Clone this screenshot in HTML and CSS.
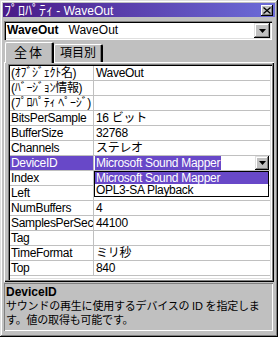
FILE: index.html
```html
<!DOCTYPE html>
<html lang="ja">
<head>
<meta charset="utf-8">
<title>ﾌﾟﾛﾊﾟﾃｨ - WaveOut</title>
<link rel="stylesheet" href="styles.css">
</head>
<body>
<div class="window">
  <div class="titlebar">
    <span class="title"><span class="kana">ﾌﾟﾛﾊﾟﾃｨ</span> - WaveOut</span>
    <span class="close"><svg width="8" height="7" viewBox="0 0 8 7"><path d="M0.5 0.5 L7.5 6.5 M7.5 0.5 L0.5 6.5" stroke="#000" stroke-width="1.3" fill="none"/></svg></span>
  </div>
  <div class="content">
    <div class="combo">
      <div class="combo-text"><b>WaveOut</b>&nbsp;&nbsp; WaveOut</div>
      <div class="dd-btn"><svg width="7" height="4" viewBox="0 0 7 4"><path d="M0 0 H7 L3.5 4 Z" fill="#000"/></svg></div>
    </div>
    <div class="tabs">
      <div class="tab active">全体</div>
      <div class="tab">項目別</div>
    </div>
    <div class="page">
      <div class="grid">
        <div class="row"><div class="name">(ｵﾌﾞｼﾞｪｸﾄ名)</div><div class="val">WaveOut</div></div>
        <div class="row"><div class="name">(ﾊﾞｰｼﾞｮﾝ情報)</div><div class="val"></div></div>
        <div class="row"><div class="name">(ﾌﾟﾛﾊﾟﾃｨ ﾍﾟｰｼﾞ)</div><div class="val"></div></div>
        <div class="row"><div class="name">BitsPerSample</div><div class="val">16 ビット</div></div>
        <div class="row"><div class="name">BufferSize</div><div class="val">32768</div></div>
        <div class="row"><div class="name">Channels</div><div class="val">ステレオ</div></div>
        <div class="row sel"><div class="name">DeviceID</div><div class="val edit"><span class="hl">Microsoft Sound Mapper</span><span class="cell-btn"><svg width="7" height="4" viewBox="0 0 7 4"><path d="M0 0 H7 L3.5 4 Z" fill="#000"/></svg></span>
          <div class="list">
            <div class="item on">Microsoft Sound Mapper</div>
            <div class="item">OPL3-SA Playback</div>
          </div>
        </div></div>
        <div class="row"><div class="name">Index</div><div class="val"></div></div>
        <div class="row"><div class="name">Left</div><div class="val"></div></div>
        <div class="row"><div class="name">NumBuffers</div><div class="val">4</div></div>
        <div class="row"><div class="name">SamplesPerSec</div><div class="val">44100</div></div>
        <div class="row"><div class="name">Tag</div><div class="val"></div></div>
        <div class="row"><div class="name">TimeFormat</div><div class="val">ミリ秒</div></div>
        <div class="row"><div class="name">Top</div><div class="val">840</div></div>
      </div>
    </div>
    <div class="desc">
      <div class="desc-title">DeviceID</div>
      <div class="desc-text">サウンドの再生に使用するデバイスの ID を指定します。値の取得も可能です。</div>
    </div>
  </div>
</div>
</body>
</html>
```

FILE: styles.css
```css
* { box-sizing: border-box; }
body {
  margin: 0;
  width: 278px;
  height: 337px;
  overflow: hidden;
  background: #c0c0c0;
  font-family: "Liberation Sans", "Noto Sans CJK JP", sans-serif;
  font-size: 12px;
  color: #000;
}
.window {
  width: 278px;
  height: 337px;
  padding: 3px;
  display: flex;
  flex-direction: column;
  box-shadow: inset -1px -1px #000, inset 1px 1px #dfdfdf, inset -2px -2px #808080, inset 2px 2px #fff;
}
.titlebar {
  height: 14px;
  flex: none;
  background: linear-gradient(90deg, #4a1a88, #6c6cd8);
  color: #fff;
  display: flex;
  align-items: center;
  justify-content: space-between;
  padding: 0 2px 0 1px;
  line-height: 14px;
  font-size: 12px;
}
.title { white-space: nowrap; }
.title .kana { font-size: 14px; }
.close {
  width: 12px;
  height: 11px;
  background: #c0c0c0;
  display: flex;
  align-items: center;
  justify-content: center;
  box-shadow: inset -1px -1px #000, inset 1px 1px #fff, inset -2px -2px #808080;
}
.content {
  flex: 1;
  display: flex;
  flex-direction: column;
  padding: 4px 1px 3px 1px;
}
.combo {
  height: 19px;
  flex: none;
  margin-right: 2px;
  background: #fff;
  display: flex;
  align-items: center;
  padding: 2px 2px 2px 3px;
  box-shadow: inset 1px 1px #808080, inset 2px 2px #000, inset -1px -1px #fff, inset -2px -2px #dfdfdf;
}
.combo-text { flex: 1; line-height: 15px; font-size: 12px; white-space: nowrap; }
.combo-text b { font-weight: bold; }
.dd-btn {
  width: 16px;
  height: 15px;
  background: #c0c0c0;
  display: flex;
  align-items: center;
  justify-content: center;
  box-shadow: inset -1px -1px #000, inset 1px 1px #dfdfdf, inset -2px -2px #808080, inset 2px 2px #fff;
}
.tabs {
  height: 20px;
  flex: none;
  margin-top: 2px;
  display: flex;
  align-items: flex-end;
  padding-left: 1px;
  position: relative;
  z-index: 1;
}
.tab {
  height: 18px;
  padding: 0 5px;
  line-height: 17px;
  font-size: 12px;
  background: #c0c0c0;
  border-top: 1px solid #fff;
  border-left: 1px solid #fff;
  border-right: 2px solid #000;
  border-radius: 2px 2px 0 0;
  box-shadow: inset -1px 0 #808080;
}
.tab.active {
  height: 21px;
  margin-bottom: -1px;
  padding: 0 8px 0 8px;
  line-height: 19px;
  font-size: 13px;
  letter-spacing: 2px;
}
.page {
  flex: 1;
  padding: 1px 2px 2px 3px;
  border-left: 1px solid #fff;
  border-top: 1px solid #fff;
  box-shadow: inset -1px -1px #000, inset -2px -2px #808080;
  display: flex;
}
.grid {
  flex: 1;
  background: #fff;
  padding: 2px;
  box-shadow: inset 1px 1px #808080, inset 2px 2px #000, inset -1px -1px #fff, inset -2px -2px #dfdfdf;
}
.row {
  height: 15px;
  display: flex;
  border-bottom: 1px solid #c0c0c0;
  line-height: 14px;
  white-space: nowrap;
  letter-spacing: -0.3px;
}
.name {
  width: 84px;
  flex: none;
  padding-left: 1px;
  border-right: 1px solid #c0c0c0;
  overflow: hidden;
}
.val {
  flex: 1;
  padding-left: 2px;
}
.sel .name { background: #6848c8; color: #fff; }
.val.edit {
  position: relative;
  display: flex;
  justify-content: space-between;
  padding-left: 1px;
  padding-right: 1px;
}
.hl { background: #6848c8; color: #fff; padding: 0 1px; }
.cell-btn {
  width: 14px;
  height: 14px;
  background: #c0c0c0;
  display: flex;
  align-items: center;
  justify-content: center;
  box-shadow: inset -1px -1px #000, inset 1px 1px #dfdfdf, inset -2px -2px #808080, inset 2px 2px #fff;
}
.list {
  position: absolute;
  left: 0;
  top: 15px;
  width: 175px;
  height: 26px;
  background: #fff;
  border: 1px solid #000;
  z-index: 2;
}
.item { height: 12px; line-height: 12px; padding-left: 1px; }
.item.on { background: #6848c8; color: #fff; }
.desc {
  height: 48px;
  flex: none;
  margin-top: 1px;
  margin-right: 1px;
  padding: 3px 2px 0 2px;
  box-shadow: inset 1px 1px #808080, inset -1px -1px #fff;
}
.desc-title { font-weight: bold; font-size: 12px; line-height: 13px; }
.desc-text { font-size: 11px; line-height: 14px; letter-spacing: -0.2px; }
```
